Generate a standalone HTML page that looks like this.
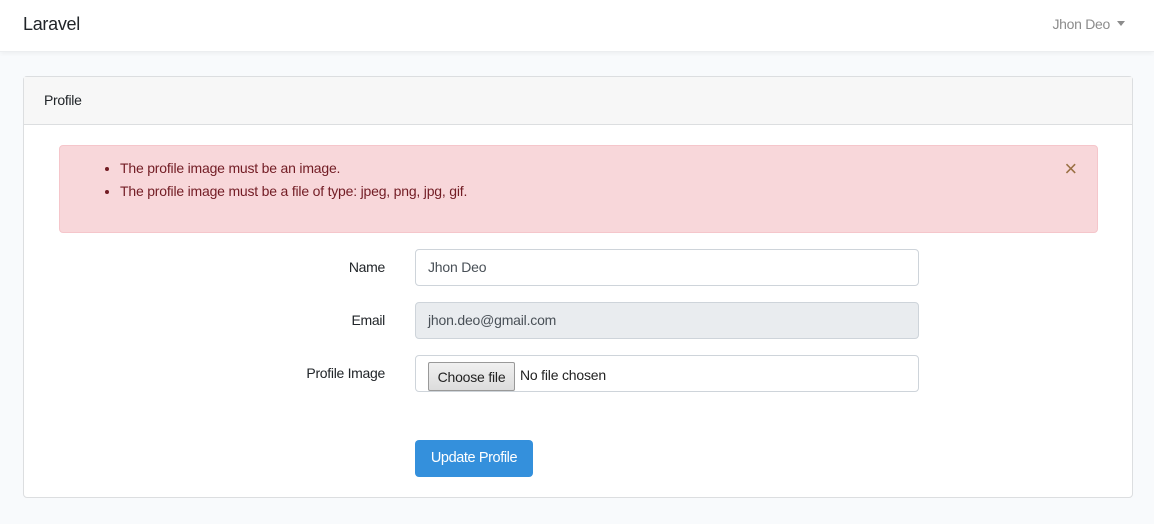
<!DOCTYPE html>
<html><head><style>
*{box-sizing:border-box}
body{margin:0;width:1154px;height:524px;background:#f8fafc;font-family:"Liberation Sans",sans-serif;font-size:14px;color:#212529;position:relative;overflow:hidden}
.nav{position:absolute;left:0;top:0;width:1154px;height:52px;background:#fff;box-shadow:0 2px 4px rgba(0,0,0,.04);border-bottom:1px solid #eceef0}
.brand{position:absolute;left:23px;top:14px;font-size:18px;color:#212529;letter-spacing:-0.3px}
.user{position:absolute;right:29px;top:16px;color:#8c8c8c;font-size:14px;letter-spacing:-0.3px}
.user:after{content:"";display:inline-block;margin-left:7px;vertical-align:3px;border-top:5px solid #8c8c8c;border-left:4.5px solid transparent;border-right:4.5px solid transparent}
.card{position:absolute;left:23px;top:76px;width:1110px;height:422px;background:#fff;border:1px solid #dcdee0;border-radius:4px}
.ch{height:48px;background:#f7f7f7;border-bottom:1px solid #dcdee0;padding:15px 20px;font-size:14px;letter-spacing:-0.3px}
.alert{position:absolute;left:35px;top:68px;width:1039px;height:88px;background:#f8d7da;border:1px solid #f5c6cb;border-radius:4px;color:#721c24;letter-spacing:-0.2px}
.alert ul{margin:0;padding:0 0 0 60px;position:absolute;top:11px}
.alert li{line-height:23px}
.x{position:absolute;right:20px;top:10px;font-size:22px;color:#9a7044}
.lbl{position:absolute;right:747px;font-size:14px;letter-spacing:-0.3px;top:0}
.in{position:absolute;left:391px;width:504px;height:37px;border:1px solid #ced4da;border-radius:4px;padding:9px 12px;font-size:14px;color:#495057;letter-spacing:-0.2px}
.btn{position:absolute;left:391px;top:363px;width:118px;height:37px;background:#3490dc;border-radius:4px;color:#fff;font-size:14.5px;padding:10px 0;text-align:center;white-space:nowrap;letter-spacing:-0.4px}
.cf{position:absolute;left:12px;top:6px;width:87px;height:29px;background:linear-gradient(#f0f0f0,#dcdcdc);border:1px solid #999;border-radius:2px;padding:6px 0;text-align:center;color:#222;white-space:nowrap}
</style></head><body>
<div class="nav"><div class="brand">Laravel</div><div class="user">Jhon Deo</div></div>
<div class="card">
<div class="ch">Profile</div>
<div class="alert"><ul><li>The profile image must be an image.</li><li>The profile image must be a file of type: jpeg, png, jpg, gif.</li></ul><div class="x">×</div></div>
<div class="lbl" style="top:182px">Name</div>
<div class="in" style="top:172px">Jhon Deo</div>
<div class="lbl" style="top:235px">Email</div>
<div class="in" style="top:225px;background:#e9ecef">jhon.deo@gmail.com</div>
<div class="lbl" style="top:288px">Profile Image</div>
<div class="in" style="top:278px;padding-left:104px;padding-top:11px;color:#222">No file chosen<div class="cf">Choose file</div></div>
<div class="btn">Update Profile</div>
</div>
</body></html>
